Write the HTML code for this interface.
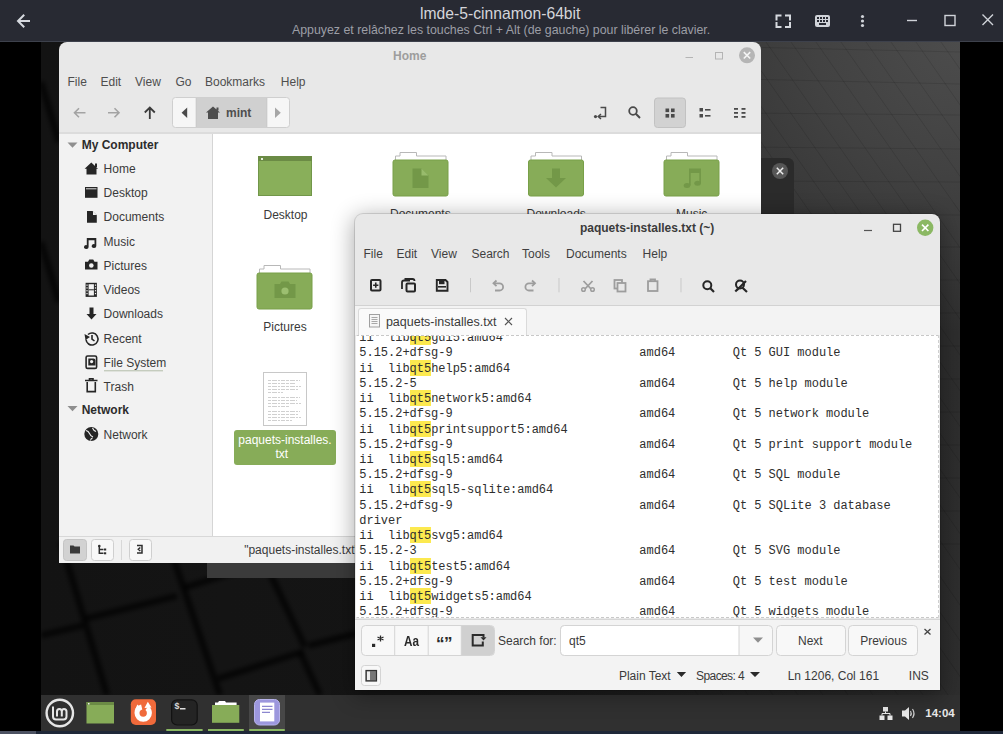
<!DOCTYPE html>
<html><head><meta charset="utf-8">
<style>
*{margin:0;padding:0;box-sizing:border-box}
html,body{width:1003px;height:734px;overflow:hidden;background:#000;font-family:"Liberation Sans",sans-serif;position:relative}
.a{position:absolute}
.t{position:absolute;white-space:nowrap;line-height:1}
svg{position:absolute;overflow:visible}
#topbar{left:0;top:0;width:1003px;height:41px;background:#282a33}
#topline{left:0;top:41px;width:1003px;height:1px;background:#3d414c}
#desk{left:41px;top:42px;width:919px;height:653px;background:radial-gradient(ellipse 650px 580px at 919px 0,#4c4c4c 0%,#424242 22%,#383838 38%,#2e2e2e 50%,rgba(40,40,40,0) 85%),linear-gradient(to right,#131313 0%,#151515 40%,#1d1d1d 65%,#2e2e2e 100%);overflow:hidden}
#taskbar{left:41px;top:695px;width:919px;height:36px;background:#303030}
#scroll{left:0;top:731px;width:1003px;height:3px;background:#1f2838}
#scrollthumb{left:0;top:731px;width:36px;height:3px;background:#4c5262}
#fm{left:59px;top:42px;width:702px;height:521px;background:#e8e8e8;border-radius:8px 8px 0 0;overflow:hidden}
#te{left:355px;top:214px;width:585px;height:476px;background:#e8e8e8;border-radius:8px 8px 0 0;overflow:hidden;box-shadow:0 0 10px 2px rgba(0,0,0,.35)}
.ui{font-size:12px;color:#3c3c3c}
#code b{font-weight:normal;background:#fce94f;padding-top:2px}
</style></head><body>
<div id="topbar" class="a"></div>
<div id="topline" class="a"></div>
<!-- top bar content -->
<svg style="left:0;top:0" width="1003" height="41">
  <g stroke="#d6d9df" stroke-width="2" fill="none" stroke-linecap="square">
    <path d="M29 21H18.5M23.5 15.5L18 21L23.5 26.5"/>
    <path d="M776.5 19.5V15.5H780.5M786 15.5H790V19.5M790 23V27H786M780.5 27H776.5V23"/>
  </g>
  <rect x="815" y="15" width="15" height="12" rx="2" fill="#d0d3d9"/>
  <g fill="#282a33">
    <rect x="817" y="17" width="2" height="2"/><rect x="820" y="17" width="2" height="2"/><rect x="823" y="17" width="2" height="2"/><rect x="826" y="17" width="2" height="2"/>
    <rect x="817" y="20" width="2" height="2"/><rect x="820" y="20" width="2" height="2"/><rect x="823" y="20" width="2" height="2"/><rect x="826" y="20" width="2" height="2"/>
    <rect x="819" y="23" width="7" height="2"/>
  </g>
  <g fill="#d0d3d9"><circle cx="862.5" cy="16.5" r="1.6"/><circle cx="862.5" cy="21" r="1.6"/><circle cx="862.5" cy="25.5" r="1.6"/></g>
  <g stroke="#d0d3d9" stroke-width="1.4" fill="none">
    <path d="M907 20.5H917"/>
    <rect x="945" y="15.5" width="10" height="10"/>
    <path d="M982.5 14.5L993 25M993 14.5L982.5 25"/>
  </g>
</svg>
<div class="t" style="left:420px;top:6.3px;font-size:15.7px;color:#d4d5da">lmde-5-cinnamon-64bit</div>
<div class="t" style="left:292px;top:23.5px;font-size:12.35px;color:#9c9ea6">Appuyez et relâchez les touches Ctrl + Alt (de gauche) pour libérer le clavier.</div>

<div id="desk" class="a">
  <svg style="left:0;top:0" width="919" height="653">
    <defs><filter id="bl" x="-20%" y="-20%" width="140%" height="140%"><feGaussianBlur stdDeviation="2.2"/></filter></defs>
    <g stroke="#000" stroke-opacity=".11" stroke-width="1" fill="none">
      <path d="M200 0L657 653M225 0L682 653M250 0L707 653M275 0L732 653M300 0L757 653M325 0L782 653M350 0L807 653M375 0L832 653M400 0L857 653M425 0L882 653M450 0L907 653M475 0L932 653M500 0L957 653M525 0L982 653M550 0L1007 653M575 0L1032 653M600 0L1057 653M625 0L1082 653M650 0L1107 653M675 0L1132 653M700 0L1157 653M725 0L1182 653M750 0L1207 653M775 0L1232 653M800 0L1257 653M825 0L1282 653M850 0L1307 653M875 0L1332 653M900 0L1357 653M925 0L1382 653"/>
      <path d="M700 5L919 10M700 37L919 42M700 71L919 73M700 105L919 107M700 139L919 140M700 172L919 173M700 205L919 205M700 238L919 238M700 271L919 271M700 304L919 304M700 337L919 337M700 370L919 370M700 403L919 403M700 436L919 436M700 469L919 469M700 502L919 502"/>
    </g>
    <g stroke="#060606" stroke-opacity=".7" stroke-width="6.5" fill="none" filter="url(#bl)">
      <path d="M20 500L66 653M127 500L179 653M226 525L264 605M259 610L279 653"/>
      <path d="M0 593.4L42.3 583.3M44 576.8L136 553.9M143.4 545.6L200 528M177 636.6L262.6 609.5M267.5 603.7L319 590.6M0 690L70 672"/>
      <path d="M0 40L18 100M0 200L18 260"/>
    </g>
  </svg>
</div>
<div class="a" style="left:761px;top:158px;width:33px;height:57px;background:#2b2b2b;border-radius:0 6px 0 0"></div>
<svg style="left:0;top:0" width="1003" height="734">
  <circle cx="780" cy="171" r="8" fill="#565656"/>
  <path d="M776.8 167.8L783.2 174.2M783.2 167.8L776.8 174.2" stroke="#eee" stroke-width="1.5"/>
</svg>
<div class="a" style="left:207px;top:562px;width:148px;height:16px;background:#3b3b3b"></div>

<div id="taskbar" class="a"></div>
<div class="a" style="left:249px;top:695px;width:36px;height:34px;background:#474747"></div>
<svg style="left:0;top:0" width="1003" height="734">
  <circle cx="59.8" cy="713" r="13.2" fill="none" stroke="#e6e6e6" stroke-width="2.4"/>
  <path d="M53 706.5V716.5Q53 719.5 56 719.5H63.5Q66.5 719.5 66.5 716.5V711.5Q66.5 709 64 709Q61.8 709 61.8 711.5V716.5M61.8 711.5Q61.8 709 59.4 709Q57 709 57 711.5V716.5" fill="none" stroke="#e6e6e6" stroke-width="2"/>
  <rect x="86.5" y="702" width="27.5" height="21.5" fill="#87ac58"/>
  <rect x="86.5" y="702" width="27.5" height="3" fill="#6b8b45"/>
  <rect x="88" y="703" width="1.5" height="1.5" fill="#eee"/>
  <rect x="130.8" y="699.3" width="25.2" height="25.7" rx="5" fill="#f06a3b"/>
  <circle cx="143.2" cy="713" r="6.2" fill="none" stroke="#fff" stroke-width="5" stroke-dasharray="26.9 5.5 6.6"/>
  <path d="M144.5 708L147.8 701.8L151.5 707.5Z" fill="#fff"/>
  <path d="M135.2 709.5L137.3 704.5L140.5 707.8Z" fill="#fff"/>
  <rect x="171.6" y="699.8" width="25.6" height="25.2" rx="5.5" fill="#242424" stroke="#121212" stroke-width="1.2"/>
  <rect x="180" y="708" width="5.5" height="1.5" fill="#ddd"/>
  <path d="M212 705H239.3V722.8H212Z" fill="#87ac58"/>
  <path d="M215 705V702.5H218L219 701H225L226 702.5H236.6V705Z" fill="#fff"/>
  <rect x="254.5" y="699.5" width="25" height="25.5" rx="5" fill="#9c97dd" stroke="#b7b3ea" stroke-width="1"/>
  <rect x="260" y="702.6" width="14.3" height="18.8" fill="#fff"/>
  <path d="M262 706.3H272.5M262 709.3H272.5M262 712.3H270" stroke="#8c87cf" stroke-width="1.2"/>
  <g fill="#8bb863">
    <rect x="166.3" y="729" width="36.3" height="2"/>
    <rect x="208" y="729" width="35.8" height="2"/>
    <rect x="249.2" y="729" width="35.6" height="2"/>
  </g>
  <g fill="#e8e8e8">
    <rect x="883" y="707" width="5" height="4.5"/>
    <rect x="879.5" y="715.5" width="5" height="4.5"/>
    <rect x="887.5" y="715.5" width="5" height="4.5"/>
  </g>
  <path d="M885.5 711.5V713.5M882 715.5V713.5H890V715.5" stroke="#e8e8e8" stroke-width="1" fill="none"/>
  <path d="M902 710.5H905L909 707V720L905 716.5H902Z" fill="#e8e8e8"/>
  <path d="M910.5 711Q912 713.5 910.5 716M912.5 709Q915.5 713.5 912.5 718" stroke="#cfcfcf" stroke-width="1.2" fill="none"/>
</svg>
<div class="t" style="left:174.3px;top:702.5px;font-size:9px;font-weight:bold;color:#d8d8d8;font-family:'Liberation Mono',monospace">$</div>
<div class="t" style="left:925.3px;top:707.8px;font-size:11.5px;font-weight:bold;color:#e8e8e8">14:04</div>

<div id="scroll" class="a"></div>
<div id="scrollthumb" class="a"></div>

<!-- FILE MANAGER -->
<div class="a" style="left:59px;top:42px;width:702px;height:521px;background:#e8e8e8;border-radius:8px 8px 0 0"></div>
<div class="t" style="left:393px;top:49.8px;font-size:12px;font-weight:bold;color:#9d9d9d">Home</div>
<svg style="left:0;top:0" width="1003" height="734">
  <path d="M685.5 57.5H693" stroke="#b4b4b4" stroke-width="1"/>
  <rect x="715.5" y="52.5" width="7" height="6.5" fill="none" stroke="#b4b4b4" stroke-width="1"/>
  <circle cx="747" cy="55.3" r="8" fill="#b5b5b5"/>
  <path d="M743.8 52.1L750.2 58.5M750.2 52.1L743.8 58.5" stroke="#f4f4f4" stroke-width="1.6"/>
</svg>
<div class="ui" style="position:absolute;left:0;top:0;color:#4e4e4e">
  <span class="t" style="left:67.5px;top:75.8px">File</span>
  <span class="t" style="left:100.5px;top:75.8px">Edit</span>
  <span class="t" style="left:135px;top:75.8px">View</span>
  <span class="t" style="left:175.5px;top:75.8px">Go</span>
  <span class="t" style="left:205px;top:75.8px">Bookmarks</span>
  <span class="t" style="left:280.8px;top:75.8px">Help</span>
</div>
<!-- toolbar -->
<svg style="left:0;top:0" width="1003" height="734">
  <g stroke="#a3a3a3" stroke-width="1.6" fill="none">
    <path d="M85.5 112.7H74.5M79 108.2L74.5 112.7L79 117.2"/>
    <path d="M108 112.7H119M114.5 108.2L119 112.7L114.5 117.2"/>
  </g>
  <path d="M149.8 119V107.5M144.8 112.5L149.8 107.5L154.8 112.5" stroke="#3b3b3b" stroke-width="1.8" fill="none"/>
  <rect x="172.5" y="97.5" width="117" height="30" rx="3" fill="#f6f6f6" stroke="#cfcfcf"/>
  <rect x="196.2" y="98" width="70.6" height="29" fill="#d0d0d0"/>
  <path d="M196.2 98V127M266.8 98V127" stroke="#c6c6c6"/>
  <path d="M187.2 107.6V118L181.6 112.8Z" fill="#4a4a4a"/>
  <path d="M275 107.6V118L280.8 112.8Z" fill="#a6a6a6"/>
  <path d="M213 106.5L220 112.5H218V119H208V112.5H206Z M216.5 107.5h2v3h-2z" fill="#4e4e4e"/>
  <g fill="#4a4a4a">
    <circle cx="595.5" cy="116.6" r="1.6"/>
  </g>
  <path d="M600.5 107.5H605.5V116.5H598.5M601 114L598.2 116.5L601 119" stroke="#4a4a4a" stroke-width="1.5" fill="none"/>
  <circle cx="633" cy="111" r="3.8" stroke="#4a4a4a" stroke-width="1.8" fill="none"/>
  <path d="M635.8 113.8L640 118" stroke="#4a4a4a" stroke-width="2"/>
  <rect x="654.5" y="98" width="31" height="29.5" rx="3" fill="#d2d2d2" stroke="#c2c2c2"/>
  <g fill="#4a4a4a">
    <rect x="665.5" y="108.5" width="3.6" height="3.6"/><rect x="671" y="108.5" width="3.6" height="3.6"/>
    <rect x="665.5" y="114" width="3.6" height="3.6"/><rect x="671" y="114" width="3.6" height="3.6"/>
    <rect x="699.5" y="108" width="3.5" height="3.5"/><rect x="705" y="109" width="5.5" height="1.6"/>
    <rect x="699.5" y="114" width="3.5" height="3.5"/><rect x="705" y="115" width="5.5" height="1.6"/>
    <rect x="734" y="108" width="4" height="1.8"/><rect x="741.5" y="108" width="4" height="1.8"/>
    <rect x="734" y="112" width="4" height="1.8"/><rect x="741.5" y="112" width="4" height="1.8"/>
    <rect x="734" y="116" width="4" height="1.8"/><rect x="741.5" y="116" width="4" height="1.8"/>
  </g>
</svg>
<div class="t" style="left:226px;top:106.8px;font-size:12px;font-weight:bold;color:#4e4e4e">mint</div>
<!-- panes -->
<div class="a" style="left:59px;top:132px;width:702px;height:2px;background:#dcdcdc"></div>
<div class="a" style="left:59px;top:134px;width:153px;height:402px;background:#f2f2f2"></div>
<div class="a" style="left:212px;top:134px;width:1px;height:402px;background:#d5d5d5"></div>
<div class="a" style="left:213px;top:134px;width:548px;height:402px;background:#fff"></div>
<!-- sidebar -->
<svg style="left:0;top:0" width="1003" height="734">
  <path d="M67.5 142.5H77.5L72.5 147.8Z" fill="#8f8f8f"/>
  <path d="M67.5 406H77.5L72.5 411.3Z" fill="#8f8f8f"/>
  <g fill="#262626">
    <path d="M91.3 162.5L98 168.8H96.5V174.6H86.5V168.8H84.6Z"/>
    <rect x="95" y="163.5" width="2" height="3.5"/>
    <rect x="85" y="187" width="12.5" height="10.8"/>
    <path d="M87 211H92.5L96.8 215.3V222.8H87Z"/>
    <path d="M86.8 238H96.3V246A2.3 1.9 0 1 1 94.5 244.2V240.3H88.6V247A2.3 1.9 0 1 1 86.8 245.2Z"/>
    <path d="M85 261.8H88L89.3 259.6H93.2L94.5 261.8H97.5V269.4H85Z"/>
  </g>
  <path d="M86 188.8H96.5" stroke="#f2f2f2" stroke-width=".9"/>
  <path d="M93 211.3V215H96.6Z" fill="#f2f2f2"/>
  <g fill="#262626">
    <path d="M85.6 282.8H96.9V296.9H85.6Z"/>
    <path d="M89.5 307.5H93.5V314H96.5L91.5 319.5L86.5 314H89.5Z"/>
  </g>
  <circle cx="91.3" cy="265.5" r="2.3" fill="#f2f2f2"/>
  <g fill="#f2f2f2">
    <rect x="88.6" y="284.2" width="5.3" height="11.3"/>
    <rect x="86.4" y="284.5" width="1.2" height="1.3"/><rect x="86.4" y="287.3" width="1.2" height="1.3"/><rect x="86.4" y="290.1" width="1.2" height="1.3"/><rect x="86.4" y="292.9" width="1.2" height="1.3"/>
    <rect x="94.9" y="284.5" width="1.2" height="1.3"/><rect x="94.9" y="287.3" width="1.2" height="1.3"/><rect x="94.9" y="290.1" width="1.2" height="1.3"/><rect x="94.9" y="292.9" width="1.2" height="1.3"/>
  </g>
  <path d="M88.6 289.8H93.9" stroke="#262626" stroke-width="1"/>
  <g stroke="#262626" fill="none" stroke-width="1.6">
    <path d="M86 339.5A6 6 0 1 0 88 334.5"/>
    <path d="M92 335V339L94.5 341"/>
    <rect x="86.1" y="356" width="10.5" height="12.4" rx="1.5"/>
    <path d="M85 380.5H97.5M87.2 382V391.6H95.3V382M89.5 380V378.8H93V380"/>
  </g>
  <path d="M84.5 334L85.5 340L90 337Z" fill="#262626"/>
  <path d="M88.3 358.6H93.5A2 2 0 0 1 95.5 360.6V365.5H88.3Z" fill="#262626"/>
  <circle cx="91.6" cy="361.6" r="1.6" fill="#f2f2f2"/>
  <circle cx="91.3" cy="434" r="7" fill="#262626"/>
  <path d="M86 430.5Q88.5 431 89.5 433.5Q90.5 436 93 437M92.5 428Q93.5 430.5 96 431.5M90.5 440.5Q90.8 438.5 92.5 438" stroke="#f2f2f2" stroke-width="1.1" fill="none"/>
  <path d="M104 370.8H163" stroke="#b3bca8" stroke-width="1"/>
</svg>
<div class="ui" style="position:absolute;left:0;top:0;color:#3a3a3a">
  <span class="t" style="left:81.7px;top:138.5px;font-weight:bold;color:#2c2c2c">My Computer</span>
  <span class="t" style="left:103.6px;top:162.7px">Home</span>
  <span class="t" style="left:103.6px;top:187px">Desktop</span>
  <span class="t" style="left:103.6px;top:211.3px">Documents</span>
  <span class="t" style="left:103.6px;top:235.7px">Music</span>
  <span class="t" style="left:103.6px;top:259.9px">Pictures</span>
  <span class="t" style="left:103.6px;top:284px">Videos</span>
  <span class="t" style="left:103.6px;top:308.3px">Downloads</span>
  <span class="t" style="left:103.6px;top:332.6px">Recent</span>
  <span class="t" style="left:103.6px;top:356.6px">File System</span>
  <span class="t" style="left:103.6px;top:380.7px">Trash</span>
  <span class="t" style="left:81.7px;top:404.3px;font-weight:bold;color:#2c2c2c">Network</span>
  <span class="t" style="left:103.6px;top:428.8px">Network</span>
</div>
<!-- content icons -->
<svg style="left:0;top:0" width="1003" height="734">
  <rect x="258.5" y="156.5" width="53" height="39" fill="#89af5a" stroke="#719649" stroke-width="1"/>
  <rect x="258" y="156" width="54" height="5" fill="#6b8b45"/>
  <rect x="261" y="158" width="2" height="2" fill="#e8efe0"/>
  <g id="fold">
    <path d="M395.5 160V156H400V152.5H416.5V156H446V160" fill="#fff" stroke="#b8b8b8" stroke-width="1"/>
    <rect x="393" y="160" width="55" height="36" rx="2" fill="#87ac58" stroke="#78a048" stroke-width="1"/>
  </g>
  <path d="M412.5 168.5H421.5L428.5 175.5V188H412.5Z" fill="#739848"/>
  <path d="M421.5 168.5V175.5H428.5Z" fill="#98bb6c"/>
  <use href="#fold" x="135.5"/>
  
  <path d="M552 168.5H560V178H566L556 187.5L546 178H552Z" fill="#739848"/>
  <use href="#fold" x="271"/>
  <path d="M689 168.5H701V183.5H699.3V173H690.7V185.5H689Z" fill="#739848"/>
  <ellipse cx="687" cy="185.6" rx="3.3" ry="2.5" fill="#739848"/>
  <ellipse cx="697.6" cy="183.3" rx="3.3" ry="2.5" fill="#739848"/>
  <use href="#fold" x="-136" y="113"/>
  <path d="M274.5 284H280L281.5 281.5H288.5L290 284H295.5V298H274.5Z" fill="#739848"/>
  <circle cx="285" cy="291" r="3.6" fill="#9cbf70"/>
  <rect x="263.5" y="372.5" width="43" height="53" fill="#fff" stroke="#c8c8c8"/>
  <g stroke="#c4c4c4" stroke-width=".8" stroke-dasharray="3 1 5 1 2 1 4 1">
    <path d="M268 380.5H300M268 383.5H296M268 386.5H301M268 389.5H299M268 392.5H283"/>
    <path d="M268 397.5H300M268 400.5H297M268 403.5H301M268 406.5H290"/>
    <path d="M268 411.5H300M268 414.5H298M268 417.5H301M268 420.5H292"/>
  </g>
  <rect x="234" y="430" width="102" height="35" rx="3" fill="#87ac58"/>
</svg>
<div class="ui" style="position:absolute;left:0;top:0;color:#3a3a3a">
  <span class="t" style="left:263.5px;top:208.5px">Desktop</span>
  <span class="t" style="left:390px;top:208.3px">Documents</span>
  <span class="t" style="left:526.5px;top:208.3px">Downloads</span>
  <span class="t" style="left:676px;top:208.3px">Music</span>
  <span class="t" style="left:263.3px;top:321px">Pictures</span>
  <span class="t" style="left:238.3px;top:434px;color:#fff">paquets-installes.</span>
  <span class="t" style="left:275.5px;top:447.7px;color:#fff">txt</span>
</div>
<!-- status bar -->
<div class="a" style="left:59px;top:536px;width:702px;height:1px;background:#d8d8d8"></div>
<div class="a" style="left:59px;top:537px;width:702px;height:26px;background:#f1f1f1"></div>
<svg style="left:0;top:0" width="1003" height="734">
  <rect x="63.5" y="539.5" width="23" height="21" rx="3" fill="#d2d2d2" stroke="#c4c4c4"/>
  <rect x="91.5" y="539.5" width="22" height="21" rx="3" fill="#f8f8f8" stroke="#cfcfcf"/>
  <rect x="129.5" y="539.5" width="22" height="21" rx="3" fill="#f8f8f8" stroke="#cfcfcf"/>
  <path d="M121.5 540V560" stroke="#d8d8d8"/>
  <path d="M70 545.5H73.5L74.5 546.5H80V553.5H70Z" fill="#3a3a3a"/>
  <circle cx="99.3" cy="546" r="1.3" fill="#2e2e2e"/>
  <path d="M99.3 546V554M99.3 549.5H103.5M99.3 553.3H103.5" stroke="#2e2e2e" stroke-width="1.5" fill="none"/>
  <rect x="104" y="548.5" width="2.2" height="2" fill="#2e2e2e"/><rect x="104" y="552.3" width="2.2" height="2" fill="#2e2e2e"/>
  <path d="M137 545.5H142V553H137M140.3 547.5L138.3 549.3L140.3 551" stroke="#2e2e2e" stroke-width="1.5" fill="none"/>
</svg>
<div class="t ui" style="left:244.2px;top:543.8px;color:#3a3a3a">"paquets-installes.txt" selected (87,4 kB)</div>

<!-- TEXT EDITOR -->
<div class="a" style="left:355px;top:214px;width:585px;height:476px;background:#e8e8e8;border-radius:8px 8px 0 0;box-shadow:0 0 0 1px rgba(0,0,0,.12),0 4px 22px 2px rgba(0,0,0,.32)"></div>
<div class="t" style="left:579.9px;top:221.5px;font-size:12px;font-weight:bold;color:#3b3b3b">paquets-installes.txt (~)</div>
<svg style="left:0;top:0" width="1003" height="734">
  <path d="M864 230.5H872" stroke="#555" stroke-width="1.2"/>
  <rect x="893.5" y="224.3" width="7" height="7" fill="none" stroke="#444" stroke-width="1.3"/>
  <circle cx="925.2" cy="227.8" r="8.2" fill="#8bb863"/>
  <path d="M922 224.6L928.4 231M928.4 224.6L922 231" stroke="#fff" stroke-width="1.6"/>
</svg>
<div class="ui" style="position:absolute;left:0;top:0;color:#3f3f3f">
  <span class="t" style="left:363.5px;top:247.9px">File</span>
  <span class="t" style="left:396.5px;top:247.9px">Edit</span>
  <span class="t" style="left:431px;top:247.9px">View</span>
  <span class="t" style="left:471.5px;top:247.9px">Search</span>
  <span class="t" style="left:522px;top:247.9px">Tools</span>
  <span class="t" style="left:566px;top:247.9px">Documents</span>
  <span class="t" style="left:642.6px;top:247.9px">Help</span>
</div>
<svg style="left:0;top:0" width="1003" height="734">
  <!-- new -->
  <rect x="371" y="280" width="9.5" height="10.5" rx="1" fill="none" stroke="#262626" stroke-width="2"/>
  <path d="M375.75 282.5V287.8M373.1 285.2H378.4" stroke="#262626" stroke-width="1.6"/>
  <!-- open -->
  <path d="M402 289V282.5Q402 280.5 404 280.5H410M404.5 279H412.5Q414.5 279 414.5 281" stroke="#262626" stroke-width="1.8" fill="none"/>
  <rect x="406.5" y="283.5" width="8.5" height="8" rx="1" fill="none" stroke="#262626" stroke-width="2"/>
  <!-- save -->
  <path d="M436.8 280H445.5L447.5 282V290.8H436.8Z" fill="none" stroke="#262626" stroke-width="1.9"/>
  <rect x="439" y="281" width="5.5" height="3.2" fill="#262626"/>
  <rect x="438" y="286" width="8" height="1.6" fill="#262626"/>
  <path d="M470.5 278V292.3M559 278V292.3M681 278V292.3" stroke="#c9c9c9" stroke-width="1"/>
  <g stroke="#9d9d9d" stroke-width="1.8" fill="none">
    <path d="M494 283.3H499.5A3.6 3.6 0 0 1 499.5 290.5H495"/>
    <path d="M496.5 280.5L493.5 283.3L496.5 286.1"/>
    <path d="M534.5 283.3H529A3.6 3.6 0 0 0 529 290.5H533.5"/>
    <path d="M532 280.5L535 283.3L532 286.1"/>
    <path d="M583.5 281L592.5 290.5M592.5 281L583.5 290.5"/>
    <rect x="614.5" y="280" width="7.5" height="8.5"/>
    <rect x="617.5" y="283" width="8" height="8.5" fill="#e8e8e8"/>
    <rect x="648" y="281.2" width="9.5" height="9.8"/>
    <path d="M650.5 281.2V279.5H655V281.2"/>
  </g>
  <circle cx="583.5" cy="289.5" r="1.8" fill="#e8e8e8" stroke="#9d9d9d" stroke-width="1.5"/>
  <circle cx="592.5" cy="289.5" r="1.8" fill="#e8e8e8" stroke="#9d9d9d" stroke-width="1.5"/>
  <circle cx="707.3" cy="285.3" r="4" stroke="#262626" stroke-width="2" fill="none"/>
  <path d="M710.3 288.3L714 292" stroke="#262626" stroke-width="2.2"/>
  <circle cx="740" cy="284.5" r="4" stroke="#262626" stroke-width="2" fill="none"/>
  <path d="M737 290L746 281M742.5 287.8L747 292" stroke="#262626" stroke-width="2.2"/>
  <path d="M735.3 291.5L737.5 289.3" stroke="#262626" stroke-width="2.2"/>
</svg>
<!-- tabs -->
<div class="a" style="left:355px;top:305px;width:585px;height:1px;background:#d2d2d2"></div>
<div class="a" style="left:355px;top:306px;width:585px;height:29px;background:#f3f3f3"></div>
<div class="a" style="left:358px;top:308px;width:168.5px;height:28px;background:#fafafa;border:1px solid #dadada;border-bottom:none;border-radius:3px 3px 0 0"></div>
<svg style="left:0;top:0" width="1003" height="734">
  <rect x="369.5" y="314.5" width="10" height="12.5" fill="#f6f6f6" stroke="#a0a0a0" stroke-width="1"/>
  <path d="M371.5 317.5H377.5M371.5 319.5H377.5M371.5 321.5H377.5M371.5 323.5H377.5" stroke="#a8a8a8" stroke-width="1"/>
  <path d="M505 318L512 325M512 318L505 325" stroke="#555" stroke-width="1.2"/>
</svg>
<div class="t" style="left:385.9px;top:315.7px;font-size:12.5px;color:#3a3a3a">paquets-installes.txt</div>
<!-- content -->
<div class="a" style="left:356px;top:335px;width:583px;height:283px;background:#fff;overflow:hidden;border-top:1px dashed #c8c8c8;border-bottom:1px dashed #c8c8c8;border-left:1px solid #fff;border-right:1px dashed #d0d0d0">
<pre id="code" style="position:absolute;left:2.3px;top:-4.74px;margin:0;font-family:'Liberation Mono',monospace;font-size:12px;letter-spacing:-.02px;line-height:15.22px;color:#2e2e2e">ii  lib<b>qt5</b>gui5:amd64
5.15.2+dfsg-9                          amd64        Qt 5 GUI module
ii  lib<b>qt5</b>help5:amd64
5.15.2-5                               amd64        Qt 5 help module
ii  lib<b>qt5</b>network5:amd64
5.15.2+dfsg-9                          amd64        Qt 5 network module
ii  lib<b>qt5</b>printsupport5:amd64
5.15.2+dfsg-9                          amd64        Qt 5 print support module
ii  lib<b>qt5</b>sql5:amd64
5.15.2+dfsg-9                          amd64        Qt 5 SQL module
ii  lib<b>qt5</b>sql5-sqlite:amd64
5.15.2+dfsg-9                          amd64        Qt 5 SQLite 3 database
driver
ii  lib<b>qt5</b>svg5:amd64
5.15.2-3                               amd64        Qt 5 SVG module
ii  lib<b>qt5</b>test5:amd64
5.15.2+dfsg-9                          amd64        Qt 5 test module
ii  lib<b>qt5</b>widgets5:amd64
5.15.2+dfsg-9                          amd64        Qt 5 widgets module</pre>
</div>
<!-- search bar -->
<div class="a" style="left:355px;top:619px;width:585px;height:1px;background:#d6d6d6"></div>
<div class="a" style="left:355px;top:620px;width:585px;height:70px;background:#f3f3f3"></div>
<svg style="left:0;top:0" width="1003" height="734">
  <rect x="361.5" y="625.5" width="133" height="30" rx="4" fill="#f8f8f8" stroke="#d4d4d4"/>
  <path d="M461.3 626V655H490.5Q494 655 494 651.5V629.5Q494 626 490.5 626Z" fill="#d0d0d0"/>
  <path d="M394.7 626V655M428.2 626V655M461.3 626V655" stroke="#d4d4d4"/>
  <rect x="372" y="643.8" width="3.2" height="3.2" fill="#2a2a2a"/>
  <path d="M380.5 635.5V641.5M377.5 637L383.5 640M383.5 637L377.5 640" stroke="#2a2a2a" stroke-width="1.3"/>
  <path d="M481.5 635H472.7V645.6H482.8V641.5" stroke="#2a2a2a" stroke-width="2" fill="none"/>
  <path d="M478.5 635H483.5V637.5" stroke="#2a2a2a" stroke-width="2" fill="none"/>
  <path d="M480.5 637.3H486.5L483.5 640.6Z" fill="#2a2a2a"/>
  <rect x="560.5" y="625.5" width="212" height="30" rx="4" fill="#f7f7f7" stroke="#d4d4d4"/>
  <path d="M564.5 625.5H739V655.5H564.5Q560.5 655.5 560.5 651.5V629.5Q560.5 625.5 564.5 625.5Z" fill="#fff" stroke="#d4d4d4"/>
  <path d="M753 637.5H763L758 642.7Z" fill="#8f8f8f"/>
  <rect x="776.5" y="625.5" width="69" height="30" rx="4" fill="#f8f8f8" stroke="#d4d4d4"/>
  <rect x="848.5" y="625.5" width="69" height="30" rx="4" fill="#f8f8f8" stroke="#d4d4d4"/>
  <path d="M924.5 629L930.5 634.5M930.5 629L924.5 634.5" stroke="#444" stroke-width="1.3"/>
  <rect x="361.5" y="665.5" width="19" height="20" rx="3" fill="#f8f8f8" stroke="#d4d4d4"/>
  <rect x="366" y="670.5" width="10.5" height="10.5" fill="#777" stroke="#333" stroke-width="1.2"/>
  <rect x="367" y="671.5" width="3" height="8.5" fill="#eee"/>
  <path d="M676.8 672H686.1L681.45 677Z M750 672H760L755 677Z" fill="#2a2a2a"/>
</svg>
<div class="ui" style="position:absolute;left:0;top:0;color:#3a3a3a">
  <span class="t" style="left:404.2px;top:632.6px;font-size:15px;font-weight:bold;color:#2a2a2a;transform:scaleX(.78);transform-origin:0 0">Aa</span>
  <span class="t" style="left:436px;top:634.5px;font-size:17px;font-weight:bold;color:#2a2a2a;letter-spacing:-.5px">“”</span>
  <span class="t" style="left:498px;top:634.8px">Search for:</span>
  <span class="t" style="left:569px;top:634.8px">qt5</span>
  <span class="t" style="left:798px;top:634.6px">Next</span>
  <span class="t" style="left:860.2px;top:634.6px">Previous</span>
  <span class="t" style="left:618.9px;top:669.8px">Plain Text</span>
  <span class="t" style="left:696.1px;top:669.8px;letter-spacing:-.6px">Spaces: 4</span>
  <span class="t" style="left:787.7px;top:669.8px">Ln 1206, Col 161</span>
  <span class="t" style="left:908.8px;top:669.8px">INS</span>
</div>

</body></html>
